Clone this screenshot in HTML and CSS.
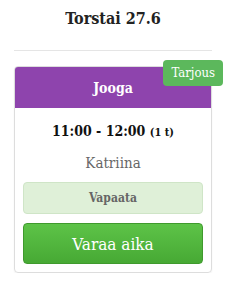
FILE: index.html
```html
<!DOCTYPE html>
<html>
<head>
<meta charset="utf-8">
<link rel="stylesheet" href="styles.css">
</head>
<body>
<div class="day">
  <h2 class="day-title">Torstai 27.6</h2>
  <hr class="divider">
  <div class="card">
    <span class="badge">Tarjous</span>
    <div class="card-header">Jooga</div>
    <div class="card-body">
      <div class="time">11:00 - 12:00 <small>(1 t)</small></div>
      <div class="teacher">Katriina</div>
      <div class="status">Vapaata</div>
      <button class="book">Varaa aika</button>
    </div>
  </div>
</div>
</body>
</html>
```
FILE: styles.css
```css
html, body {
  margin: 0;
  padding: 0;
  background: #fff;
}
body {
  font-family: "DejaVu Serif", "Liberation Serif", serif;
  font-stretch: condensed;
  color: #222;
}
.day {
  width: 198px;
  padding: 9px 0 0 14px;
}
.day-title {
  margin: 0;
  font-size: 16px;
  line-height: 20px;
  font-weight: bold;
  text-align: center;
  color: #222;
}
.divider {
  margin: 21px 0 0 0;
  border: 0;
  border-top: 1px solid #e5e5e5;
  height: 0;
}
.card {
  position: relative;
  margin-top: 15px;
  border: 1px solid #ddd;
  border-radius: 4px;
  box-shadow: 0 1px 2px rgba(0,0,0,0.06);
}
.badge {
  position: absolute;
  top: -7px;
  right: -12px;
  background: #5cb85c;
  color: #fff;
  font-size: 13px;
  line-height: 26px;
  padding: 0 8px;
  border-radius: 4px;
}
.card-header {
  background: #8e44ad;
  color: #fff;
  font-weight: bold;
  font-size: 14px;
  height: 41px;
  line-height: 42px;
  text-align: center;
  border-radius: 3px 3px 0 0;
}
.card-body {
  padding: 12px 8px 8px;
  display: flex;
  flex-direction: column;
  align-items: stretch;
  text-align: center;
}
.time {
  font-size: 14px;
  font-weight: bold;
  line-height: 22px;
  color: #111;
}
.time small {
  font-size: 11px;
}
.teacher {
  margin-top: 8px;
  font-size: 15px;
  line-height: 22px;
  color: #666;
}
.status {
  margin-top: 8px;
  height: 30px;
  line-height: 30px;
  background: #dff0d8;
  border: 1px solid #cfe5c7;
  border-radius: 4px;
  font-size: 12px;
  font-weight: bold;
  color: #666;
}
.book {
  margin-top: 9px;
  height: 41px;
  font-family: inherit;
  font-stretch: condensed;
  font-size: 17px;
  color: #fff;
  background: linear-gradient(#5dc348, #47a934);
  border: 1px solid #3f9a2d;
  border-radius: 4px;
  padding: 0;
}
```
